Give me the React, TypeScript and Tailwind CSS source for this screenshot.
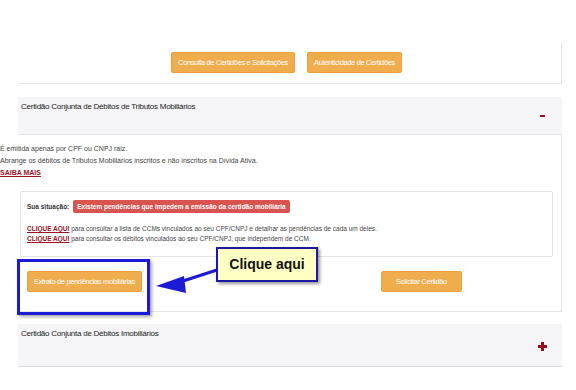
import React from 'react';

const Btn = ({ label, w }: { label: string; w: string }) => (
  <div
    className={`${w} h-[21px] rounded-[2px] bg-[#f0ad4e] border border-[#eea236] flex items-center justify-center text-white text-[7.5px] tracking-[-0.35px] whitespace-nowrap`}
  >
    {label}
  </div>
);

const MinusIcon = () => (
  <svg width="5" height="2" viewBox="0 0 5 2">
    <rect x="0" y="0" width="5" height="2" fill="#a00d1a" />
  </svg>
);

const PlusIcon = () => (
  <svg width="9" height="9" viewBox="0 0 9 9">
    <rect x="3" y="0" width="3" height="9" fill="#a00d1a" />
    <rect x="0" y="3" width="9" height="3" fill="#a00d1a" />
  </svg>
);

const App = () => {
  return (
    <div
      className="relative w-[576px] h-[390px] bg-white overflow-hidden text-[#333]"
      style={{ fontFamily: '"Liberation Sans", Arial, sans-serif' }}
    >
      {/* ---------------- main container ---------------- */}
      <div className="ml-[18px] w-[544px] pt-[43px]">
        {/* ------------- top buttons ------------- */}
        <div className="h-[41px] border-r border-b border-[#e6e6e6] flex items-start pt-[9px] pl-[153px] gap-[12px]">
          <Btn label="Consulta de Certidões e Solicitações" w="w-[124px]" />
          <Btn label="Autenticidade de Certidões" w="w-[95px]" />
        </div>

        {/* ------------- header mobiliarios ------------- */}
        <div className="mt-[13px] h-[38px] bg-[#f5f5f7] border-b border-[#e2e2e2] flex justify-between items-start pl-[3px] pr-[17px] pt-[4px]">
          <p className="text-[8px] tracking-[-0.25px] leading-[12px] text-[#222]">
            Certidão Conjunta de Débitos de Tributos Mobiliários
          </p>
          <div className="mt-[14px] flex">
            <MinusIcon />
          </div>
        </div>

        {/* ------------- content ------------- */}
        <div className="border-r border-b border-[#e6e6e6] pb-[19px]">
          <div className="-ml-[18px] pt-[8px] text-[7px] leading-[12px] text-[#444]">
            <p>É emitida apenas por CPF ou CNPJ raiz.</p>
            <p>Abrange os débitos de Tributos Mobiliários inscritos e não inscritos na Dívida Ativa.</p>
            <p className="font-bold text-[#9b111e] underline">SAIBA MAIS</p>
          </div>

          {/* situation box */}
          <div className="mt-[12px] ml-[2px] mr-[8px] border border-[#e3e3e3] rounded-[2px] pt-[8px] pb-[12px] pl-[6px]">
            <div className="flex items-center h-[13px] gap-[4px]">
              <span className="text-[6.5px] font-bold text-[#333]">Sua situação:</span>
              <span className="h-[13px] px-[4px] rounded-[2px] bg-[#d9534f] text-white text-[6.5px] font-bold flex items-center whitespace-nowrap">
                Existem pendências que impedem a emissão da certidão mobiliária
              </span>
            </div>
            <div className="mt-[11px] text-[6.5px] leading-[10px] text-[#444]">
              <p>
                <span className="font-bold text-[#9b111e] underline">CLIQUE AQUI</span> para consultar a lista de CCMs
                vinculados ao seu CPF/CNPJ e detalhar as pendências de cada um deles.
              </p>
              <p>
                <span className="font-bold text-[#9b111e] underline">CLIQUE AQUI</span> para consultar os débitos
                vinculados ao seu CPF/CNPJ, que independem de CCM.
              </p>
            </div>
          </div>

          {/* action buttons */}
          <div className="mt-[14px] flex justify-between pl-[9px] pr-[99px]">
            <Btn label="Extrato de pendências mobiliárias" w="w-[115px]" />
            <Btn label="Solicitar Certidão" w="w-[81px]" />
          </div>
        </div>

        {/* ------------- header imobiliarios ------------- */}
        <div className="mt-[12px] h-[43px] bg-[#f5f5f7] border-b border-[#dcdcdc] flex justify-between items-start pl-[3px] pr-[15px] pt-[4px]">
          <p className="text-[8px] tracking-[-0.25px] leading-[12px] text-[#222]">Certidão Conjunta de Débitos Imobiliários</p>
          <div className="mt-[14px] flex">
            <PlusIcon />
          </div>
        </div>
      </div>

      {/* ---------------- annotation overlays ---------------- */}
      <div className="absolute left-[17px] top-[259px] w-[133px] h-[56px] border-[3px] border-[#1b1bd6] shadow-[2px_2px_3px_rgba(0,0,0,0.35)]" />

      <svg className="absolute left-0 top-0 pointer-events-none" width="576" height="390" viewBox="0 0 576 390">
        <line x1="220" y1="269" x2="180" y2="282" stroke="#1b1bd6" strokeWidth="3" />
        <polygon points="156,286 184,276 186,293" fill="#1b1bd6" />
      </svg>

      <div className="absolute left-[216px] top-[247px] w-[102px] h-[35px] bg-[#ffffc4] border-2 border-[#1a1aa0] shadow-[2px_2px_3px_rgba(0,0,0,0.4)] flex justify-center pt-[5px]">
        <span className="text-[14px] font-bold text-[#111] leading-[20px]">Clique aqui</span>
      </div>
    </div>
  );
};

export default App;
